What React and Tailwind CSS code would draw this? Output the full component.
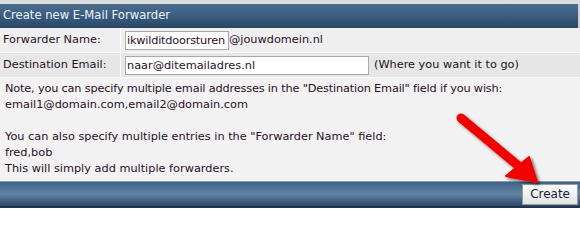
import React from 'react';

const font = { fontFamily: '"DejaVu Sans", Verdana, sans-serif' };

const RedArrow = () => (
  <svg className="absolute left-0 top-0 pointer-events-none" width="580" height="208" viewBox="0 0 580 208">
    <defs>
      <filter id="arrowShadow" x="-20%" y="-20%" width="140%" height="140%">
        <feDropShadow dx="2" dy="2" stdDeviation="1.5" floodColor="#000" floodOpacity="0.55" />
      </filter>
    </defs>
    <g filter="url(#arrowShadow)">
      <line x1="461" y1="118" x2="521" y2="168" stroke="#f20000" strokeWidth="9" strokeLinecap="round" />
      <polygon points="537,182 506,176 529,157" fill="#f20000" stroke="#f20000" strokeWidth="2" strokeLinejoin="round" />
    </g>
  </svg>
);

export default function App() {
  return (
    <div className="relative w-[580px] h-[208px] overflow-hidden bg-[#f2f2f2] text-[11.3px] text-[#2a0f2a]" style={font}>
      <div className="h-[4px] bg-[#dedede]" />
      <div className="h-[24px] flex items-center px-[3px] text-[11.6px] text-[#eef2f6] bg-gradient-to-b from-[#4a6d8f] via-[#3a5d80] to-[#284766] border-r-2 border-[#d0d0d0]">
        Create new E-Mail Forwarder
      </div>

      <div className="flex h-[25px] bg-[#efefef] border-b border-white">
        <div className="w-[121px] flex items-center pl-[3px] border-r border-white">Forwarder Name:</div>
        <div className="flex items-center pl-[4px]">
          <input
            readOnly
            value="ikwilditdoorsturen"
            className="w-[104px] h-[19px] px-[1px] bg-white border border-[#a9a9a9] text-[11.3px] tracking-[-0.2px] text-[#2a0f2a] outline-none"
            style={font}
          />
          <span>@jouwdomein.nl</span>
        </div>
      </div>

      <div className="flex h-[24px] bg-[#e7e7e7]">
        <div className="w-[121px] flex items-center pl-[3px] border-r border-white">Destination Email:</div>
        <div className="flex items-center pl-[4px] gap-[5px]">
          <input
            readOnly
            value="naar@ditemailadres.nl"
            className="w-[244px] h-[19px] px-[1px] bg-white border border-[#a9a9a9] text-[11.3px] text-[#2a0f2a] outline-none"
            style={font}
          />
          <span>(Where you want it to go)</span>
        </div>
      </div>

      <div className="px-[5px] pt-[3px] h-[104px] leading-[16px] bg-[#f2f2f2] border-t border-[#fafafa]">
        <p className="tracking-[-0.17px]">Note, you can specify multiple email addresses in the "Destination Email" field if you wish:</p>
        <p>email1@domain.com,email2@domain.com</p>
        <p>&nbsp;</p>
        <p>You can also specify multiple entries in the "Forwarder Name" field:</p>
        <p>fred,bob</p>
        <p>This will simply add multiple forwarders.</p>
      </div>

      <div className="h-[27px] flex items-center justify-end pr-[2px] border-t border-[#8a9aaa] bg-gradient-to-b from-[#3e6286] via-[#6585a6] to-[#2a4868] border-b-2 border-b-[#1e3550]">
        <button
          className="h-[21px] px-[7px] text-[12px] text-[#1a1a3a] bg-gradient-to-b from-[#ffffff] to-[#e2e2e2] border border-[#9a9a9a]"
          style={font}
        >
          Create
        </button>
      </div>

      <RedArrow />
    </div>
  );
}
